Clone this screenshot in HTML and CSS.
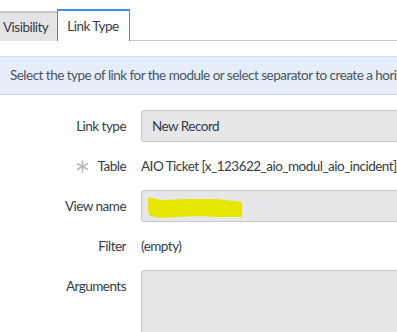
FILE: index.html
```
<html>

<head>
    <link rel="stylesheet" href="styles.css">
</head>

<body>
    <div id="tabs">
        <div class="tab">Visibility</div>
        <div class="tab active">Link Type</div>
    </div>

    <div id="info">
        Select the type of link for the module or select separator to create a horizontal line
    </div>

    <div id="form">
        <div class="label">Link type</div>
        <div class="field input">New Record</div>

        <div class="label">
            <svg class="required" width="13" height="13" viewBox="0 0 13 13">
                <g stroke="#b4b9be" stroke-width="1.6" stroke-linecap="round">
                    <line x1="6.5" y1="1" x2="6.5" y2="12" />
                    <line x1="1.7" y1="3.7" x2="11.3" y2="9.3" />
                    <line x1="1.7" y1="9.3" x2="11.3" y2="3.7" />
                </g>
            </svg>
            Table
        </div>
        <div class="field">AIO Ticket [x_123622_aio_modul_aio_incident]</div>

        <div class="label">View name</div>
        <div class="field input">
            <svg class="scribble" width="102" height="30" viewBox="0 0 102 30">
                <polygon fill="#e6e600" points="7,7 11,8 19,10 49,9 74,9 94,11 101,12 101,27 74,27 59,26 34,27 19,28 9,26 7,22" />
            </svg>
        </div>

        <div class="label">Filter</div>
        <div class="field">(empty)</div>

        <div class="label">Arguments</div>
        <div class="field textarea"></div>
    </div>
</body>

</html>
```

FILE: styles.css
```
* {
    margin: 0;
    padding: 0;
    box-sizing: border-box;
}

body {
    font-family: Lato, 'Noto Sans', sans-serif;
    font-size: 13.5px;
    letter-spacing: -0.52px;
    color: #343d47;
    background-color: white;
    overflow: hidden;
}

div#tabs {
    display: flex;
    flex-direction: row;
    margin-top: 10px;
    height: 31px;
    border-bottom: 1px solid #c6c6c6;
}

div.tab {
    display: flex;
    align-items: center;
    padding: 0 9px 0 3px;
    background-color: #e4e4e4;
    border-top: 2px solid #c9c9c9;
    margin-top: 1px;
    height: 30px;
}

div.tab.active {
    background-color: white;
    border: 1px solid #3d8fe8;
    border-top: 2px solid #3d8fe8;
    border-bottom: none;
    margin-top: -1px;
    height: 32px;
    padding: 0 10px 0 9px;
}

div#info {
    margin-top: 15px;
    height: 39px;
    line-height: 37px;
    padding-left: 10px;
    background-color: #e5eef8;
    border-top: 1px solid #c8dcf2;
    border-bottom: 1px solid #c8dcf2;
    color: #4a5562;
    white-space: nowrap;
    overflow: hidden;
}

div#form {
    display: grid;
    grid-template-columns: 126px 300px;
    grid-auto-rows: 32px;
    column-gap: 15px;
    row-gap: 8px;
    margin-top: 15px;
    align-items: start;
}

div.label {
    display: flex;
    justify-content: flex-end;
    align-items: center;
    height: 32px;
    white-space: nowrap;
}

svg.required {
    margin-right: 9px;
}

div.field {
    display: flex;
    align-items: center;
    height: 32px;
    white-space: nowrap;
}

div.input {
    background-color: #e6e7e9;
    border: 1px solid #c6c7ca;
    border-radius: 3px;
    padding-left: 10px;
}

div.input > svg.scribble {
    margin-left: -11px;
    margin-top: -2px;
}

div.textarea {
    height: 80px;
    background-color: #e6e7e9;
    border: 1px solid #c6c7ca;
    border-radius: 3px;
}
```
